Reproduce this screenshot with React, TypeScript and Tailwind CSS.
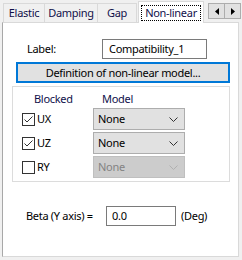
import React from 'react';

type Tab = { label: string; width: string; active?: boolean };

const tabs: Tab[] = [
  { label: 'Elastic', width: 'w-[42px]' },
  { label: 'Damping', width: 'w-[54px]' },
  { label: 'Gap', width: 'w-[40px]' },
  { label: 'Non-linear', width: 'w-[66px]', active: true },
];

function Chevron({ disabled }: { disabled?: boolean }) {
  return (
    <svg width="9" height="5" viewBox="0 0 9 5" className="block">
      <path d="M0.5 0.5 L4.5 4.5 L8.5 0.5" fill="none" stroke={disabled ? '#b0b0b0' : '#333'} strokeWidth="1" />
    </svg>
  );
}

function Checkbox({ checked }: { checked: boolean }) {
  return (
    <span className="flex h-[13px] w-[13px] items-center justify-center border border-[#333] bg-white">
      {checked && (
        <svg width="11" height="11" viewBox="0 0 11 11" className="block">
          <path d="M1.5 5.5 L4 8 L9.5 2.5" fill="none" stroke="#333" strokeWidth="1" />
        </svg>
      )}
    </span>
  );
}

function Select({ disabled }: { disabled?: boolean }) {
  return (
    <div
      className={
        disabled
          ? 'flex h-[22px] w-[92px] items-center justify-between border border-[#bfbfbf] bg-[#cccccc] pr-[6px] pl-[4px] text-[#838383]'
          : 'flex h-[22px] w-[92px] items-center justify-between border border-[#adadad] bg-[#e1e1e1] pr-[6px] pl-[4px] text-black'
      }
    >
      <span>None</span>
      <Chevron disabled={disabled} />
    </div>
  );
}

const rows = [
  { name: 'UX', checked: true },
  { name: 'UZ', checked: true },
  { name: 'RY', checked: false, disabled: true },
];

export default function App() {
  return (
    <div className="h-[260px] w-[242px] overflow-hidden bg-[#f0f0f0] font-['Noto_Sans',sans-serif] text-[11px] leading-[14px] tracking-[-0.3px] whitespace-nowrap text-black">
      {/* tab strip */}
      <div className="flex h-[22px] items-end pl-[3px]">
        {tabs.map((tab) =>
          tab.active ? (
            <div
              key={tab.label}
              className={`${tab.width} relative z-10 -mb-px ml-[1px] flex h-[22px] items-center justify-center border border-b-0 border-[#d9d9d9] bg-white`}
            >
              <span className="border border-dotted border-black px-[3px] leading-[14px] text-[#10104a]">{tab.label}</span>
            </div>
          ) : (
            <div
              key={tab.label}
              className={`${tab.width} -ml-px flex h-[19px] items-center justify-center border border-b-0 border-[#d9d9d9] text-[#10104a] first:ml-0`}
            >
              {tab.label}
            </div>
          ),
        )}
        <div className="ml-[4px] flex self-start pt-[3px]">
          <button type="button" className="flex h-[16px] w-[17px] items-center justify-center border border-[#adadad] bg-[#e1e1e1]">
            <svg width="4" height="7" viewBox="0 0 4 7"><path d="M4 0 L0 3.5 L4 7 Z" fill="#000" /></svg>
          </button>
          <button type="button" className="-ml-px flex h-[16px] w-[17px] items-center justify-center border border-[#adadad] bg-[#e1e1e1]">
            <svg width="4" height="7" viewBox="0 0 4 7"><path d="M0 0 L4 3.5 L0 7 Z" fill="#000" /></svg>
          </button>
        </div>
      </div>

      {/* page */}
      <div className="ml-[2px] h-[235px] w-[237px] border border-[#d9d9d9] border-l-[#a8a8a8] bg-white">
        <div className="mt-[16px] flex items-center">
          <span className="ml-[24px] w-[75px]">Label:</span>
          <div className="flex h-[20px] w-[105px] items-center border border-[#7a7a7a] bg-white pl-[6px]">Compatibility_1</div>
        </div>

        <button
          type="button"
          className="mt-[3px] ml-[13px] flex h-[21px] w-[214px] items-center justify-center border-2 border-[#0078d7] bg-[#e1e1e1] text-black"
        >
          Definition of non-linear model...
        </button>

        <div className="mt-[3px] ml-[9px] h-[96px] w-[218px] border border-[#dcdcdc] pt-[5px]">
          <div className="flex text-[#10104a]">
            <span className="ml-[21px] w-[68px]">Blocked</span>
            <span>Model</span>
          </div>
          <div className="mt-[2px] flex flex-col gap-[2px]">
            {rows.map((row) => (
              <div key={row.name} className="flex h-[22px] items-center">
                <span className="ml-[9px]">
                  <Checkbox checked={row.checked} />
                </span>
                <span className="ml-[2px] w-[56px]">{row.name}</span>
                <Select disabled={row.disabled} />
              </div>
            ))}
          </div>
        </div>

        <div className="mt-[24px] flex items-center">
          <span className="ml-[23px] w-[80px]">Beta (Y axis) =</span>
          <div className="flex h-[20px] w-[70px] items-center border border-[#7a7a7a] bg-white pl-[5px]">0.0</div>
          <span className="ml-[5px]">(Deg)</span>
        </div>
      </div>
    </div>
  );
}
